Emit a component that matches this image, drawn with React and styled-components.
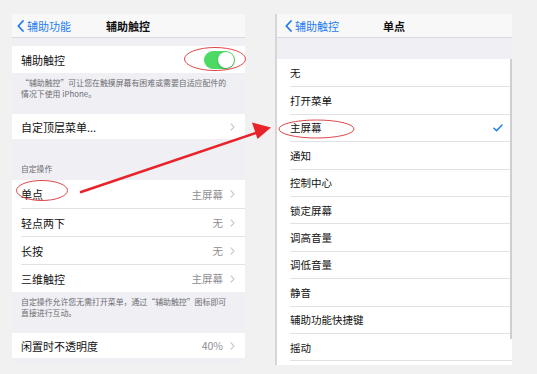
import styled, { createGlobalStyle } from "styled-components";

const GlobalStyle = createGlobalStyle`
  html, body {
    margin: 0;
    padding: 0;
    background: #f1f1f1;
  }
  body {
    font-family: "Noto Sans CJK SC", "Noto Sans", "Liberation Sans", sans-serif;
  }
`;

const blue = "#1d7cf2";
const gray = "#8e8e93";
const line = "#e2e2e6";
const groupBg = "#efeff4";

const Page = styled.div`
  position: relative;
  width: 537px;
  height: 374px;
  overflow: hidden;
  background: #f1f1f1;
  display: flex;
  align-items: flex-start;
  gap: 30px;
  padding: 14px 0 0 12px;
  box-sizing: border-box;
`;

const Screen = styled.div`
  position: relative;
  width: ${props => props.width}px;
  height: 351px;
  background: ${props => props.bg};
  display: flex;
  flex-direction: column;
  overflow: hidden;
  border-left: ${props => (props.shadow ? "2px solid #d6d6d8" : "none")};
  box-sizing: border-box;
`;

const NavBar = styled.div`
  position: relative;
  height: 23px;
  flex-shrink: 0;
  background: #f8f8f8;
  border-bottom: 1px solid #d9d9dd;
  display: flex;
  align-items: center;
  padding-left: ${props => props.pad}px;
`;

const Back = styled.div`
  display: flex;
  align-items: center;
  gap: 3px;
  color: ${blue};
  font-size: 11px;
`;

const Title = styled.div`
  position: absolute;
  left: ${props => props.center}px;
  transform: translateX(-50%);
  font-size: 11px;
  font-weight: 700;
  color: #111;
`;

const Spacer = styled.div`
  height: ${props => props.h}px;
  flex-shrink: 0;
  background: ${props => props.bg || "transparent"};
`;

const Group = styled.div`
  background: #fff;
  flex-shrink: 0;
`;

const Row = styled.div`
  height: ${props => props.h}px;
  margin-left: ${props => props.inset}px;
  padding-right: ${props => props.right}px;
  display: flex;
  align-items: center;
  justify-content: space-between;
  border-top: ${props => (props.first ? "none" : `1px solid ${line}`)};
  box-sizing: border-box;
  font-size: ${props => props.size}px;
  color: #111;
`;

const Value = styled.div`
  display: flex;
  align-items: center;
  gap: 7px;
  color: ${gray};
  font-size: 10.5px;
`;

const Footer = styled.div`
  height: ${props => props.h}px;
  flex-shrink: 0;
  padding: 5px 8px 0 9px;
  box-sizing: border-box;
  font-size: 7.9px;
  line-height: 10.5px;
  color: #6d6d72;
  white-space: nowrap;
`;

const SectionHead = styled.div`
  height: 41px;
  flex-shrink: 0;
  display: flex;
  align-items: flex-end;
  padding: 0 0 6px 9px;
  box-sizing: border-box;
  font-size: 7.8px;
  color: #6d6d72;
`;

const Toggle = styled.div`
  width: 31px;
  height: 18px;
  border-radius: 9px;
  background: #4cd964;
  position: relative;
  margin-right: 1px;
  &::after {
    content: "";
    position: absolute;
    top: 1px;
    right: 1px;
    width: 16px;
    height: 16px;
    border-radius: 50%;
    background: #fff;
    box-shadow: 0 1px 2px rgba(0, 0, 0, 0.25);
  }
`;

const List = styled.div`
  flex: 1;
  background: #fff;
  position: relative;
`;

const ScrollBar = styled.div`
  position: absolute;
  right: 0;
  top: 0;
  width: 2px;
  height: 280px;
  background: #cfcfd2;
`;

const Overlay = styled.svg`
  position: absolute;
  left: 0;
  top: 0;
  pointer-events: none;
`;

const BackChevron = () => (
  <svg width="7" height="12" viewBox="0 0 7 12">
    <path d="M6 1L1.3 6L6 11" fill="none" stroke={blue} strokeWidth="1.8" strokeLinecap="round" strokeLinejoin="round" />
  </svg>
);

const Chevron = () => (
  <svg width="5" height="8" viewBox="0 0 5 8">
    <path d="M1 0.8L4 4L1 7.2" fill="none" stroke="#c7c7cc" strokeWidth="1.1" strokeLinecap="round" strokeLinejoin="round" />
  </svg>
);

const Check = () => (
  <svg width="10" height="8" viewBox="0 0 10 8">
    <path d="M1 4.3L3.6 6.8L9 1" fill="none" stroke={blue} strokeWidth="1.5" strokeLinecap="round" strokeLinejoin="round" />
  </svg>
);

const actions = [
  ["单点", "主屏幕"],
  ["轻点两下", "无"],
  ["长按", "无"],
  ["三维触控", "主屏幕"],
];

const options = [
  "无",
  "打开菜单",
  "主屏幕",
  "通知",
  "控制中心",
  "锁定屏幕",
  "调高音量",
  "调低音量",
  "静音",
  "辅助功能快捷键",
  "摇动",
  "",
];

const App = () => (
  <>
    <GlobalStyle />
    <Page>
      <Screen width={233} bg={groupBg}>
        <NavBar pad={5}>
          <Back>
            <BackChevron />
            辅助功能
          </Back>
          <Title center={116}>辅助触控</Title>
        </NavBar>
        <Spacer h={8} />
        <Group>
          <Row h={27} inset={9} right={9} size={11} first>
            辅助触控
            <Toggle />
          </Row>
        </Group>
        <Footer h={41}>
          “辅助触控”可让您在触摸屏幕有困难或需要自适应配件的
          <br />
          情况下使用 iPhone。
        </Footer>
        <Group>
          <Row h={25} inset={9} right={10} size={11} first>
            自定顶层菜单...
            <Chevron />
          </Row>
        </Group>
        <SectionHead>自定操作</SectionHead>
        <Group>
          {actions.map(([label, value], i) => (
            <Row key={label} h={28} inset={9} right={10} size={11} first={i === 0}>
              {label}
              <Value>
                {value}
                <Chevron />
              </Value>
            </Row>
          ))}
        </Group>
        <Footer h={41}>
          自定操作允许您无需打开菜单，通过“辅助触控”图标即可
          <br />
          直接进行互动。
        </Footer>
        <Group>
          <Row h={25} inset={9} right={10} size={11} first>
            闲置时不透明度
            <Value>
              40%
              <Chevron />
            </Value>
          </Row>
        </Group>
      </Screen>

      <Screen width={237} bg="#fff" shadow>
        <NavBar pad={8}>
          <Back>
            <BackChevron />
            辅助触控
          </Back>
          <Title center={117}>单点</Title>
        </NavBar>
        <Spacer h={21} bg={groupBg} />
        <List>
          {options.map((label, i) => (
            <Row key={i} h={27.4} inset={13} right={9} size={10.5} first={i === 0}>
              {label}
              {label === "主屏幕" && <Check />}
            </Row>
          ))}
          <ScrollBar />
        </List>
      </Screen>

      <Overlay width="537" height="374" viewBox="0 0 537 374">
        <g fill="none" stroke="#e0474a" strokeWidth="1">
          <ellipse cx="215" cy="59" rx="30.5" ry="11.5" />
          <ellipse cx="42" cy="190.5" rx="25.5" ry="10" />
          <ellipse cx="316.5" cy="129" rx="37.5" ry="9" />
        </g>
        <line x1="81" y1="192" x2="256" y2="133" stroke="#e8232a" strokeWidth="2.4" strokeLinecap="round" />
        <polygon points="271,127.5 252,122.5 257.5,139" fill="#e8232a" />
      </Overlay>
    </Page>
  </>
);

export default App;
